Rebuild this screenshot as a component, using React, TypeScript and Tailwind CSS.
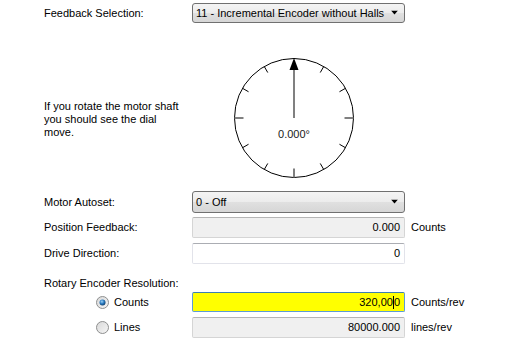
import React from "react";

const font = { fontFamily: '"Liberation Sans", Arial, sans-serif' };

function Combo({ text }: { text: string }) {
  return (
    <div className="relative flex h-full w-[213px] items-center rounded-[3px] border border-[#707070] bg-[linear-gradient(#f4f4f4_0%,#ececec_50%,#e0e0e0_51%,#d6d6d6_100%)] pl-[3px] text-[11px] text-black">
      <span>{text}</span>
      <svg className="absolute right-[5px] top-1/2 -translate-y-1/2" width="8" height="5" viewBox="0 0 8 5">
        <polygon points="0,0 7,0 3.5,4" fill="#000" />
      </svg>
    </div>
  );
}

function Field({ children, variant }: { children: React.ReactNode; variant: "ro" | "w" | "y" }) {
  const cls =
    variant === "ro"
      ? "bg-[#f0f0f0] border-[#d5d5d5] border-t-[#b5b5b5]"
      : variant === "y"
      ? "bg-[#ffff00] border-[#5d9bd6] border-t-[#3c7fb1]"
      : "bg-white border-[#e2e3ea] border-t-[#abadb3]";
  return (
    <div className={`flex h-full w-[213px] items-center justify-end rounded-[2px] border pr-[4px] text-[11px] text-black ${cls}`}>
      {children}
    </div>
  );
}

function Radio({ checked }: { checked: boolean }) {
  const gid = checked ? "rg1" : "rg0";
  return (
    <svg width="13" height="13" viewBox="0 0 13 13">
      <defs>
        <linearGradient id={gid} x1="0" y1="0" x2="1" y2="1">
          <stop offset="0" stopColor="#d8d8d8" />
          <stop offset="1" stopColor="#f6f6f6" />
        </linearGradient>
        <radialGradient id="dot" cx="0.4" cy="0.35" r="0.7">
          <stop offset="0" stopColor="#9fd3f6" />
          <stop offset="0.5" stopColor="#2a7bc1" />
          <stop offset="1" stopColor="#0d3a66" />
        </radialGradient>
      </defs>
      <circle cx="6.5" cy="6.5" r="6" fill={`url(#${gid})`} stroke="#8e8f8f" strokeWidth="1" />
      {checked && <circle cx="6.5" cy="6.5" r="3" fill="url(#dot)" />}
    </svg>
  );
}

function Dial() {
  const cx = 62;
  const cy = 62;
  const r = 59.5;
  const ticks = [];
  for (let i = 1; i < 12; i++) {
    const a = (i * 30 * Math.PI) / 180;
    const major = i % 3 === 0;
    const len = major ? 9 : 7;
    ticks.push(
      <line
        key={i}
        x1={cx + Math.sin(a) * r}
        y1={cy - Math.cos(a) * r}
        x2={cx + Math.sin(a) * (r - len)}
        y2={cy - Math.cos(a) * (r - len)}
        stroke={major ? "#808080" : "#000"}
        strokeWidth={major ? 2 : 1}
      />
    );
  }
  return (
    <svg width="124" height="124" viewBox="0 0 124 124">
      <circle cx={cx} cy={cy} r={r} fill="none" stroke="#000" strokeWidth="1" />
      {ticks}
      <line x1={cx} y1={cy} x2={cx} y2={13} stroke="#808080" strokeWidth="2" />
      <polygon points={`${cx},2 ${cx - 4.5},14 ${cx + 4.5},14`} fill="#000" />
      <text x={cx} y={82} textAnchor="middle" fontSize="11" fill="#1a1a1a" style={font}>
        0.000°
      </text>
    </svg>
  );
}

export default function App() {
  return (
    <div className="relative h-[355px] w-[523px] overflow-hidden bg-white text-[11px] text-black" style={font}>
      <div className="flex flex-col pl-[44px]">
        <div className="mt-[3px] flex h-[20px] items-center">
          <div className="w-[148px]">Feedback Selection:</div>
          <Combo text="11 - Incremental Encoder without Halls" />
        </div>

        <div className="mt-[33px] flex h-[124px] items-center">
          <div className="w-[148px] pt-[3px] leading-[13px]">
            If you rotate the motor shaft
            <br />
            you should see the dial
            <br />
            move.
          </div>
          <div className="ml-[40px]">
            <Dial />
          </div>
        </div>

        <div className="mt-[11px] flex h-[22px] items-center">
          <div className="w-[148px]">Motor Autoset:</div>
          <Combo text="0 - Off" />
        </div>

        <div className="mt-[4px] flex h-[21px] items-center">
          <div className="w-[148px]">Position Feedback:</div>
          <Field variant="ro">0.000</Field>
          <div className="ml-[6px]">Counts</div>
        </div>

        <div className="mt-[5px] flex h-[21px] items-center">
          <div className="w-[148px]">Drive Direction:</div>
          <Field variant="w">0</Field>
        </div>

        <div className="mt-[12px] flex h-[14px] items-center">
          <div>Rotary Encoder Resolution:</div>
        </div>

        <div className="mt-[2px] flex h-[20px] items-center">
          <div className="flex w-[148px] items-center pl-[52px]">
            <Radio checked />
            <span className="ml-[5px]">Counts</span>
          </div>
          <Field variant="y">
            <span>320,00</span>
            <span className="h-[13px] w-[1px] bg-black" />
            <span>0</span>
          </Field>
          <div className="ml-[6px]">Counts/rev</div>
        </div>

        <div className="mt-[5px] flex h-[21px] items-center">
          <div className="flex w-[148px] items-center pl-[52px]">
            <Radio checked={false} />
            <span className="ml-[5px]">Lines</span>
          </div>
          <Field variant="ro">80000.000</Field>
          <div className="ml-[6px]">lines/rev</div>
        </div>
      </div>
    </div>
  );
}
